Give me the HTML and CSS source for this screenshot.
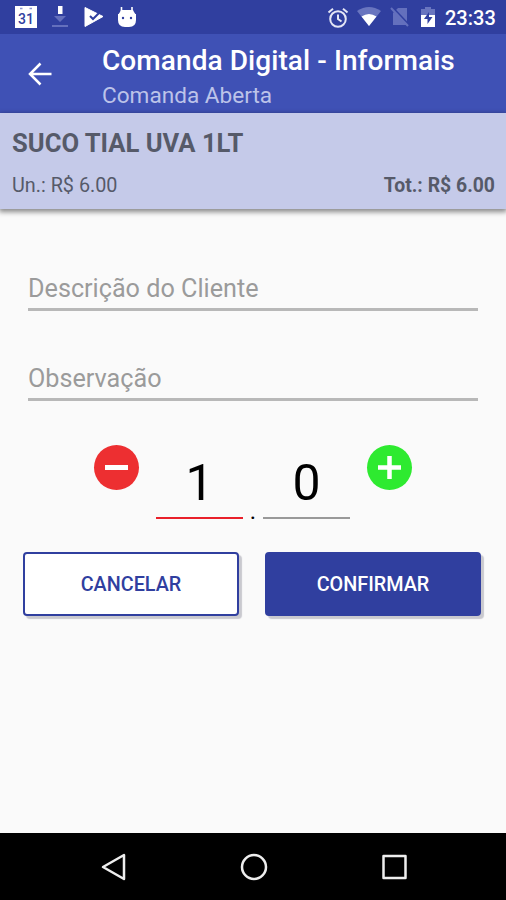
FILE: index.html
```html
<!DOCTYPE html>
<html lang="pt-BR">
  <head>
    <meta charset="utf-8" />
    <title>Comanda Digital - Informais</title>
    <link rel="stylesheet" href="styles.css">
  </head>
  <body>
    <div class="statusbar">
      <div class="notifications">
        <svg width="24" height="24" viewBox="0 0 24 24">
          <path d="M1 1h22v22H1z" fill="#fff" />
          <path d="M6 3.500h2.500M15.500 3.500h2.500" stroke="#8d96d0" stroke-width="1.500" />
          <text x="12" y="18.500" text-anchor="middle" class="day">31</text>
        </svg>
        <svg class="download" width="18" height="24" viewBox="0 0 18 24">
          <path d="M7 1h4.500v8H7z" fill="#fff" />
          <path d="M3 11h12l-6 6zM1 20h16v2H1z" fill="#6470bd" />
        </svg>
        <svg class="play" width="20" height="22" viewBox="0 0 20 22">
          <path d="M1 1.500 19 10.500 1 20.500z" fill="#fff" stroke="#fff" stroke-linejoin="round" />
          <path d="M6 10l3 3 8-8" fill="none" stroke="#303f9f" stroke-width="2" />
        </svg>
        <svg class="robot" width="20" height="22" viewBox="0 0 20 22">
          <path d="M4.500 1v5M15 1v5" stroke="#fff" stroke-width="1.600" />
          <path d="M4 4h12l1 2H3zM1 8h18v6q0 7-7 7H8q-7 0-7-7zM3 6h14l2 3H1z" fill="#fff" />
          <circle cx="6" cy="12" r="1.200" fill="#303f9f" />
          <circle cx="14" cy="12" r="1.200" fill="#303f9f" />
        </svg>
      </div>
      <div class="system">
        <svg class="alarm" width="22" height="22" viewBox="0 0 22 22" fill="none" stroke="#e4e6f5" stroke-width="2">
          <circle cx="11" cy="12" r="7.800" />
          <path d="M11 7.500V12l3.500 2.500M1.500 5.500 6 1.800M20.500 5.500 16 1.800" />
        </svg>
        <svg class="wifi" width="24" height="20" viewBox="0 0 24 20">
          <path d="M0 4Q12-4 24 4L12 19z" fill="#6975bf" />
          <path d="M4.500 9.500Q12 4.500 19.500 9.500L12 19z" fill="#fff" />
        </svg>
        <svg class="nosim" width="20" height="22" viewBox="0 0 20 22">
          <path d="M8 2h9v17H3V7z" fill="#6470bd" />
          <path d="M3 2l17 18" stroke="#303f9f" stroke-width="2" />
          <path d="M1 2l17 18" stroke="#6470bd" stroke-width="2" />
        </svg>
        <svg class="battery" width="14" height="22" viewBox="0 0 14 22">
          <path d="M4 1h6v2h4v6H0V3h4z" fill="#6975bf" />
          <path d="M0 9h14v12H0z" fill="#fff" />
          <path d="M8 6l-5 7h3.500v5l5-7H8z" fill="#303f9f" />
        </svg>
        <span class="clock">23:33</span>
      </div>
    </div>

    <div class="toolbar">
      <svg class="back" width="24" height="24" viewBox="0 0 24 24" fill="none" stroke="#fff" stroke-width="2.500">
        <path d="M23.500 12H2M12.500 1.500 2 12l10.500 10.500" />
      </svg>
      <div class="titles">
        <h1>Comanda Digital - Informais</h1>
        <h2>Comanda Aberta</h2>
      </div>
    </div>

    <div class="item">
      <h3>SUCO TIAL UVA 1LT</h3>
      <div class="prices">
        <span class="unit">Un.: R$ 6.00</span>
        <span class="total">Tot.: R$ 6.00</span>
      </div>
    </div>

    <form>
      <input class="field" type="text" placeholder="Descrição do Cliente" />
      <input class="field" type="text" placeholder="Observação" />
      <div class="quantity">
        <button type="button" class="round minus" aria-label="Diminuir">
          <svg width="45" height="45" viewBox="0 0 45 45">
            <path d="M11 22.500h23" stroke="#fff" stroke-width="5" />
          </svg>
        </button>
        <input class="digit active" type="text" value="1" />
        <span class="point">.</span>
        <input class="digit" type="text" value="0" />
        <button type="button" class="round plus" aria-label="Aumentar">
          <svg width="45" height="45" viewBox="0 0 45 45">
            <path d="M11 22.500h23M22.500 11v23" stroke="#fff" stroke-width="4.500" />
          </svg>
        </button>
      </div>
      <div class="actions">
        <button type="button" class="action cancel">CANCELAR</button>
        <button type="button" class="action confirm">CONFIRMAR</button>
      </div>
    </form>

    <div class="navbar">
      <svg width="28" height="28" viewBox="0 0 28 28">
        <path d="M24 2v24L3 14z" />
      </svg>
      <svg width="28" height="28" viewBox="0 0 28 28">
        <circle cx="14" cy="14" r="12" />
      </svg>
      <svg width="28" height="28" viewBox="0 0 28 28">
        <path d="M3.500 3h22v22h-22z" />
      </svg>
    </div>
  </body>
</html>
```
FILE: styles.css
```css
* {
  box-sizing: border-box;
  font-family: Roboto, sans-serif;
}
body {
  margin: 0;
  height: 900px;
  display: flex;
  flex-direction: column;
  background-color: #fafafa;
  overflow: hidden;
}
h1,
h2,
h3 {
  margin: 0;
  white-space: nowrap;
}
svg {
  display: block;
}
.statusbar {
  height: 34px;
  padding: 0 11px 0 14px;
  display: flex;
  justify-content: space-between;
  align-items: center;
  background-color: #303f9f;
}
.notifications,
.system {
  display: flex;
  align-items: center;
}
.day {
  font-size: 14px;
  font-weight: 500;
  fill: #303f9f;
}
.download {
  margin-left: 13px;
}
.play {
  margin-left: 15px;
}
.robot {
  margin-left: 13px;
}
.alarm {
  margin-top: 2px;
}
.wifi {
  margin-left: 8px;
}
.nosim {
  margin-left: 9px;
}
.battery {
  margin-left: 11px;
}
.clock {
  width: 50px;
  margin-left: 10px;
  color: #fff;
  font-size: 20px;
  font-weight: 500;
  line-height: 34px;
  padding-top: 2px;
}
.toolbar {
  height: 79px;
  padding-left: 28px;
  display: flex;
  align-items: center;
  background-color: #3f51b5;
}
.titles {
  margin-left: 50px;
  padding-top: 7px;
}
h1 {
  color: #fff;
  font-size: 28px;
  font-weight: 500;
  letter-spacing: 0.08px;
  line-height: 36px;
}
h2 {
  color: #bcc3e9;
  font-size: 22.6px;
  font-weight: 400;
  line-height: 33px;
}
.item {
  height: 96px;
  padding: 14px 11px 0 12px;
  background-color: #c5cae9;
  box-shadow: 0 2px 5px 1px rgba(0, 0, 0, 0.45);
  color: #565a69;
}
h3 {
  font-size: 25.6px;
  font-weight: 700;
  line-height: 33px;
}
.prices {
  display: flex;
  justify-content: space-between;
  margin-top: 14px;
  font-size: 19.8px;
  line-height: 24px;
}
.total {
  font-size: 19.4px;
  font-weight: 700;
}
form {
  flex: 1;
  padding: 57px 23px 0;
}
input {
  padding: 0;
  border: 0;
  outline: 0;
  background: none;
}
.field {
  display: block;
  width: 450px;
  height: 45px;
  margin: 0 5px 45px;
  padding-top: 2px;
  border-bottom: 3px solid #b8b8b8;
  font-size: 25.2px;
}
.field::placeholder {
  color: #9b9b9b;
}
.quantity {
  display: flex;
  margin: -1px 0 0 71px;
}
.round {
  width: 45px;
  height: 45px;
  padding: 0;
  border: 0;
  border-radius: 50%;
}
.minus {
  margin-right: 17px;
  background-color: #ed2f31;
}
.plus {
  margin-left: 17px;
  background-color: #2eea30;
}
.digit {
  width: 87px;
  height: 74px;
  padding-top: 4px;
  border-bottom: 2px solid #999;
  font-size: 50px;
  text-align: center;
}
.active {
  border-bottom-color: #e9202a;
}
.point {
  width: 20px;
  padding-top: 56px;
  text-align: center;
  font-size: 24px;
  line-height: 20px;
}
.actions {
  display: flex;
  gap: 26px;
  margin-top: 31px;
}
.action {
  width: 216px;
  height: 64px;
  border: 2px solid #303f9f;
  border-radius: 4px;
  box-shadow: 3px 3px 1px #c9c9cf;
  font-size: 19.8px;
  font-weight: 500;
}
.cancel {
  background-color: #fff;
  color: #303f9f;
}
.confirm {
  background-color: #303f9f;
  color: #fff;
}
.navbar {
  height: 67px;
  padding: 0 98px 0 100px;
  display: flex;
  justify-content: space-between;
  align-items: center;
  background-color: #000;
}
.navbar svg {
  fill: none;
  stroke: #eee;
  stroke-width: 2.5;
  stroke-linejoin: round;
}
```
